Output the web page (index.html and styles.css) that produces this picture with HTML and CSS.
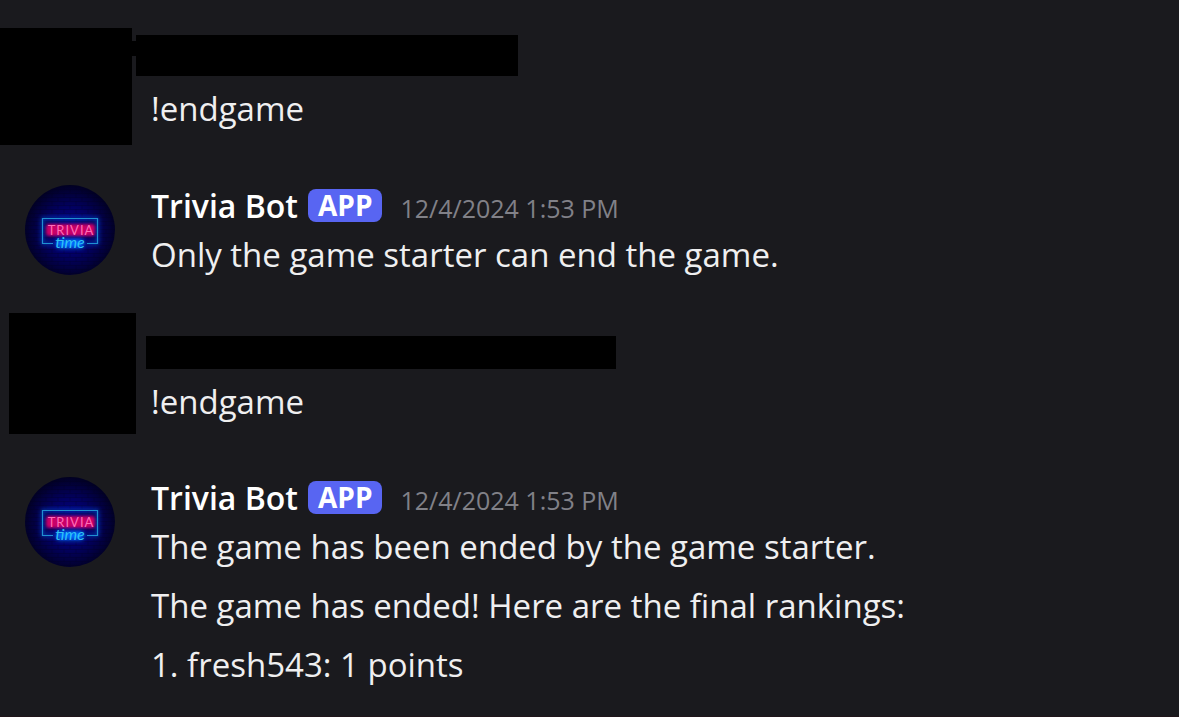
FILE: index.html
```html
<!DOCTYPE html>
<html lang="en">
<head>
<meta charset="utf-8">
<title>Trivia Bot chat</title>
<link rel="stylesheet" href="styles.css">
</head>
<body>
<svg class="defs" width="0" height="0" aria-hidden="true">
  <defs>
    <radialGradient id="wall" cx="50%" cy="52%" r="52%">
      <stop offset="0" stop-color="#000090"/>
      <stop offset="0.5" stop-color="#020064"/>
      <stop offset="0.8" stop-color="#02003e"/>
      <stop offset="1" stop-color="#010022"/>
    </radialGradient>
    <pattern id="bricks" width="12" height="8" patternUnits="userSpaceOnUse">
      <path d="M0 .5H12M0 4.500H12M3 .5V4.500M9 4.500V8" fill="none" stroke="#000018" stroke-opacity=".3" stroke-width=".8"/>
    </pattern>
    <filter id="glow" x="-40%" y="-80%" width="180%" height="260%"><feGaussianBlur stdDeviation="2.200"/></filter>
    <filter id="halo" x="-40%" y="-80%" width="180%" height="260%"><feGaussianBlur stdDeviation="1.800"/></filter>
    <symbol id="trivia-logo" viewBox="0 0 90 90">
      <circle cx="45" cy="45" r="45" fill="url(#wall)"/>
      <circle cx="45" cy="45" r="45" fill="url(#bricks)"/>
      <path d="M29 58.500H17.500V33.500H72.500V58.500H62" fill="none" stroke="#0050e0" stroke-width="2" filter="url(#glow)"/>
      <rect x="21" y="39" width="49" height="12" rx="3" fill="#c80068" filter="url(#halo)"/>
      <rect x="31" y="54" width="28" height="9" rx="4" fill="#006cff" filter="url(#glow)"/>
      <path d="M28 58.500H17.500V33.500H72.500V58.500H62" fill="none" stroke="#2090d0" stroke-width="1.200"/>
      <text class="logo-top" x="46" y="50" text-anchor="middle">TRIVIA</text>
      <text class="logo-sub" x="45" y="63" text-anchor="middle">time</text>
    </symbol>
  </defs>
</svg>

<main class="chat">
  <article class="message message-first">
    <div class="block block-first"></div>
    <div class="link"></div>
    <div class="content content-first">
      <div class="bar bar-first"></div>
      <p class="text">!endgame</p>
    </div>
  </article>

  <article class="message message-bot">
    <svg class="avatar" role="img" aria-label="Trivia Bot"><use href="#trivia-logo"/></svg>
    <div class="content">
      <header class="head">
        <span class="name">Trivia Bot</span>
        <span class="badge">APP</span>
        <time class="stamp" datetime="2024-12-04T13:53">12/4/2024 1:53 PM</time>
      </header>
      <p class="text">Only the game starter can end the game.</p>
    </div>
  </article>

  <article class="message message-second">
    <div class="block block-second"></div>
    <div class="content content-second">
      <div class="bar bar-second"></div>
      <p class="text">!endgame</p>
    </div>
  </article>

  <article class="message message-bot">
    <svg class="avatar" role="img" aria-label="Trivia Bot"><use href="#trivia-logo"/></svg>
    <div class="content">
      <header class="head">
        <span class="name">Trivia Bot</span>
        <span class="badge">APP</span>
        <time class="stamp" datetime="2024-12-04T13:53">12/4/2024 1:53 PM</time>
      </header>
      <div class="lines">
        <p class="text">The game has been ended by the game starter.</p>
        <p class="text">The game has ended! Here are the final rankings:</p>
        <p class="text">1. fresh543: 1 points</p>
      </div>
    </div>
  </article>
</main>
</body>
</html>
```
FILE: styles.css
```css
* { box-sizing: border-box; }

body {
  margin: 0;
  min-height: 100vh;
  background: #1a1a1e;
  border-bottom: 1px solid #20151a;
  color: #efeff0;
  font-family: "Open Sans", "Noto Sans", sans-serif;
  font-size: 33px;
  line-height: 49px;
}

.defs { position: absolute; }

.chat {
  display: flex;
  flex-direction: column;
  gap: 34px;
  padding-top: 28px;
}

.message { display: flex; align-items: flex-start; }
.message-bot { gap: 36px; padding-left: 25px; }
.message-first { padding-bottom: 1px; }
.message-second { padding: 0 0 4px 9px; }

.avatar {
  flex: none;
  width: 90px;
  height: 90px;
  margin-top: 5px;
}

.block, .bar, .link { background: #000; }
.block { flex: none; }
.block-first { width: 132px; height: 117px; }
.block-second { width: 127px; height: 121px; }
.link { width: 4px; height: 15px; margin-top: 13px; }

.content { min-width: 0; }
.content-first { height: 117px; padding-top: 7px; }
.content-second { height: 121px; padding-top: 23px; margin-left: 10px; }
.bar { max-width: 100%; margin-bottom: 8px; }
.bar-first { width: 382px; height: 41px; }
.bar-second { width: 470px; height: 33px; }
.content-first .text { padding-left: 15px; }
.content-second .text { padding-left: 5px; }

.text { margin: 0; }
.lines { display: flex; flex-direction: column; gap: 10px; }

.head { display: flex; align-items: baseline; padding-top: 1px; }
.name { color: #fff; font-size: 32px; font-weight: 600; }
.badge {
  align-self: center;
  margin-left: 10px;
  padding: 0 10px;
  border-radius: 8px;
  background: #5865f2;
  color: #fff;
  font-size: 28px;
  font-weight: 700;
  line-height: 33px;
}
.stamp {
  margin-left: 18px;
  color: #818188;
  font-size: 25px;
  line-height: 33px;
}

.logo-top {
  fill: #ff6cb8;
  font: 400 13px Lato, sans-serif;
  letter-spacing: 1px;
}
.logo-sub {
  fill: #2fc4f5;
  font: italic 400 16px Lato, sans-serif;
}
```
